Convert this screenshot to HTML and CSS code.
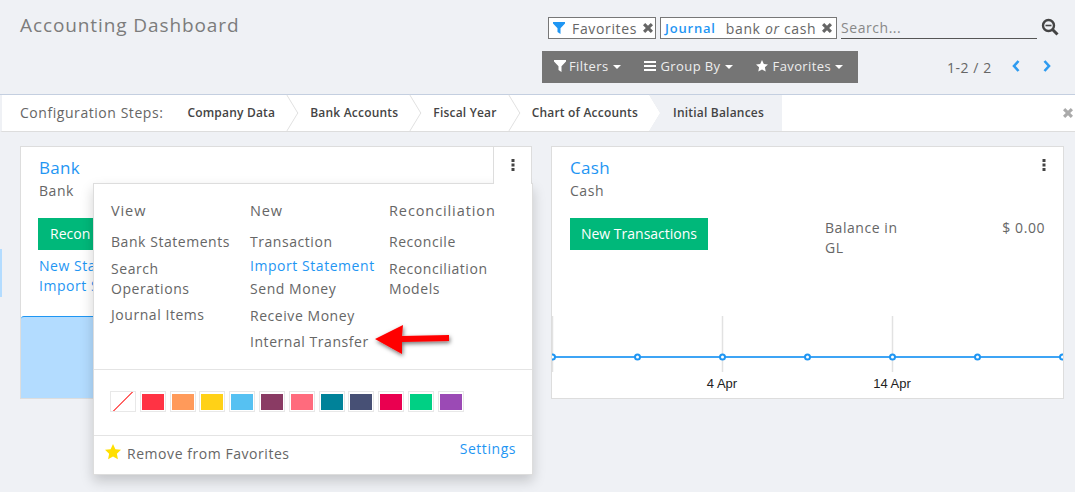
FILE: index.html
```html
<!DOCTYPE html>
<html lang="en">
<head>
    <meta charset="UTF-8">
    <title>Accounting Dashboard</title>
    <link rel="stylesheet" href="styles.css">
</head>
<body>
    <svg class="defs">
        <defs>
            <path id="i-filter" d="M0 0h12v1.400L7.500 6.200V12L4.500 10V6.200L0 1.400z"/>
            <path id="i-star" d="M6 0l1.800 3.900 4.200.5-3.100 2.900.8 4.200L6 9.400l-3.700 2.100.8-4.200L0 4.400l4.200-.5z"/>
            <path id="i-x" d="M2.200 0L5 2.800 7.800 0 10 2.200 7.200 5 10 7.800 7.800 10 5 7.200 2.200 10 0 7.800 2.800 5 0 2.200z"/>
            <path id="i-dots" d="M.5 0h3v3h-3zM.5 4.500h3v3h-3zM.5 9h3v3h-3z"/>
        </defs>
    </svg>

    <header class="control-panel">
        <h1 class="page-title">Accounting Dashboard</h1>
        <div class="search-side">
            <div class="search-row">
                <div class="facet facet-one">
                    <svg class="facet-icon" viewBox="0 0 12 12"><use href="#i-filter"/></svg>
                    <span class="facet-value">Favorites</span>
                    <svg class="facet-x" viewBox="0 0 10 10"><use href="#i-x"/></svg>
                </div>
                <div class="facet facet-two">
                    <span class="facet-label">Journal</span>
                    <span class="facet-value">bank <em>or</em> cash</span>
                    <svg class="facet-x" viewBox="0 0 10 10"><use href="#i-x"/></svg>
                </div>
                <div class="search-input">Search...</div>
                <svg class="search-icon" viewBox="0 0 18 18">
                    <circle cx="7.500" cy="7.500" r="5.500" fill="none" stroke="#444" stroke-width="2.400"/>
                    <path d="M4.500 7.500h6" stroke="#444" stroke-width="1.600"/>
                    <path d="M11.500 11.500l5 5" stroke="#444" stroke-width="3"/>
                </svg>
            </div>
            <div class="tools-row">
                <div class="btn-group">
                    <span class="tool">
                        <svg class="tool-icon" viewBox="0 0 12 12"><use href="#i-filter"/></svg>Filters<i class="caret"></i>
                    </span>
                    <span class="tool">
                        <svg class="tool-icon" viewBox="0 0 12 12"><path d="M0 1h12v2H0zM0 5h12v2H0zM0 9h12v2H0z"/></svg>Group By<i class="caret"></i>
                    </span>
                    <span class="tool">
                        <svg class="tool-icon" viewBox="0 0 12 12"><use href="#i-star"/></svg>Favorites<i class="caret"></i>
                    </span>
                </div>
                <div class="pager">
                    <span class="pager-text">1-2 / 2</span>
                    <svg class="pager-arrow" viewBox="0 0 8 12"><path d="M6.500 1L2 6l4.500 5" fill="none" stroke="#2e9bf0" stroke-width="2.600"/></svg>
                    <svg class="pager-arrow" viewBox="0 0 8 12"><path d="M1.500 1L6 6l-4.500 5" fill="none" stroke="#2e9bf0" stroke-width="2.600"/></svg>
                </div>
            </div>
        </div>
    </header>

    <nav class="steps-bar">
        <span class="steps-label">Configuration Steps:</span>
        <span class="step">Company Data</span>
        <span class="step">Bank Accounts</span>
        <span class="step">Fiscal Year</span>
        <span class="step">Chart of Accounts</span>
        <span class="step step-current">Initial Balances</span>
        <svg class="steps-close" viewBox="0 0 10 10"><use href="#i-x"/></svg>
    </nav>

    <div class="edge-strip"></div>

    <main class="cards">
        <section class="card">
            <div class="card-head">
                <h2 class="card-title">Bank</h2>
                <div class="card-sub">Bank</div>
            </div>
            <div class="card-body card-body-bank">
                <div class="bank-actions">
                    <span class="btn-green btn-bank">Recon</span>
                    <a class="card-link">New Sta</a>
                    <a class="card-link">Import S</a>
                </div>
            </div>
            <div class="bank-graph"></div>
            <div class="menu-tab menu-tab-open">
                <svg class="dots" viewBox="0 0 4 12"><use href="#i-dots"/></svg>
            </div>
            <div class="dropdown">
                <div class="menu-cols">
                    <div class="menu-col">
                        <h3 class="menu-head">View</h3>
                        <a class="menu-item">Bank Statements</a>
                        <a class="menu-item">Search<br>Operations</a>
                        <a class="menu-item">Journal Items</a>
                    </div>
                    <div class="menu-col">
                        <h3 class="menu-head">New</h3>
                        <a class="menu-item">Transaction</a>
                        <a class="menu-item menu-item-hover">Import Statement</a>
                        <a class="menu-item">Send Money</a>
                        <a class="menu-item">Receive Money</a>
                        <a class="menu-item">Internal Transfer</a>
                    </div>
                    <div class="menu-col">
                        <h3 class="menu-head">Reconciliation</h3>
                        <a class="menu-item">Reconcile</a>
                        <a class="menu-item">Reconciliation<br>Models</a>
                    </div>
                </div>
                <div class="swatches">
                    <span class="swatch swatch-none"></span>
                    <span class="swatch c1"></span>
                    <span class="swatch c2"></span>
                    <span class="swatch c3"></span>
                    <span class="swatch c4"></span>
                    <span class="swatch c5"></span>
                    <span class="swatch c6"></span>
                    <span class="swatch c7"></span>
                    <span class="swatch c8"></span>
                    <span class="swatch c9"></span>
                    <span class="swatch c10"></span>
                    <span class="swatch c11"></span>
                </div>
                <div class="menu-foot">
                    <svg class="fav-star" viewBox="0 0 12 12"><use href="#i-star"/></svg>
                    <span class="fav-text">Remove from Favorites</span>
                    <a class="settings">Settings</a>
                </div>
                <svg class="red-arrow" viewBox="0 0 85 40">
                    <defs>
                        <filter id="arrow-shadow" x="-20%" y="-30%" width="140%" height="160%">
                            <feDropShadow dx="1" dy="2" stdDeviation="2" flood-color="#000" flood-opacity=".55"/>
                        </filter>
                    </defs>
                    <path d="M3 17L31 3l-1 11 47-1 0 6-47 1 0 12z" fill="#f00" filter="url(#arrow-shadow)"/>
                </svg>
            </div>
        </section>

        <section class="card">
            <div class="card-head">
                <h2 class="card-title">Cash</h2>
                <div class="card-sub">Cash</div>
            </div>
            <div class="card-body">
                <span class="btn-green">New Transactions</span>
                <div class="balance">
                    <span class="balance-label">Balance in<br>GL</span>
                    <span class="balance-value">$ 0.00</span>
                </div>
            </div>
            <svg class="cash-chart" viewBox="0 0 511 82">
                <path d="M.5 0v56M170.500 0v56M340.500 0v56" stroke="#e2e2e2" stroke-width="1.500" fill="none"/>
                <path d="M0 41h511" stroke="#3ea4f5" stroke-width="2"/>
                <g fill="#fff" stroke="#1f96f3" stroke-width="2">
                    <circle cx="0.500" cy="41" r="2.500"/>
                    <circle cx="85.500" cy="41" r="2.500"/>
                    <circle cx="170.500" cy="41" r="2.500"/>
                    <circle cx="255.500" cy="41" r="2.500"/>
                    <circle cx="340.500" cy="41" r="2.500"/>
                    <circle cx="425.500" cy="41" r="2.500"/>
                    <circle cx="510.500" cy="41" r="2.500"/>
                </g>
                <text class="chart-label" x="170" y="72" text-anchor="middle">4 Apr</text>
                <text class="chart-label" x="340" y="72" text-anchor="middle">14 Apr</text>
            </svg>
            <div class="menu-tab">
                <svg class="dots" viewBox="0 0 4 12"><use href="#i-dots"/></svg>
            </div>
        </section>
    </main>
</body>
</html>
```
FILE: styles.css
```css
*{
    margin: 0;
    padding: 0;
    box-sizing: border-box;
}
html,body{
    height: 100%;
}
body{
    background: #eff1f5;
    font-family: "Open Sans", "Liberation Sans", sans-serif;
    font-size: 14px;
    letter-spacing: .55px;
    color: #666;
    overflow: hidden;
    position: relative;
}
.defs{
    display: none;
}
.edge-strip{
    position: absolute;
    left: 0;
    top: 249px;
    width: 2px;
    height: 48px;
    background: #b3dcff;
}

/* top panel */
.control-panel{
    height: 95px;
    padding: 12px 0 0 20px;
    display: flex;
    justify-content: space-between;
    border-bottom: 1px solid #c4cfe0;
}
.page-title{
    font-size: 19px;
    font-weight: 400;
    letter-spacing: .9px;
    color: #7c7c7c;
}
.search-side{
    width: 533px;
    padding-top: 5px;
}
.search-row{
    display: flex;
    align-items: stretch;
    height: 22px;
    margin-left: 6px;
}
.facet{
    display: flex;
    align-items: center;
    background: #fff;
    border: 1px solid #777;
    white-space: nowrap;
}
.facet-one{
    width: 108px;
    margin-right: 4px;
    padding-left: 4px;
}
.facet-two{
    width: 177px;
    padding-left: 4px;
    margin-right: 4px;
}
.facet-icon{
    width: 12px;
    height: 12px;
    fill: #1f96f3;
    margin-right: 7px;
}
.facet-label{
    color: #1f96f3;
    font-weight: 600;
    font-size: 13px;
    margin-right: 10px;
    letter-spacing: .8px;
}
.facet-value{
    color: #666;
    letter-spacing: .65px;
}
.facet-x{
    width: 10px;
    height: 10px;
    fill: #666;
    margin-left: 6px;
}
.search-input{
    width: 196px;
    margin-right: 3px;
    border-bottom: 1px solid #555;
    color: #888;
    line-height: 22px;
}
.search-icon{
    width: 18px;
    height: 18px;
    margin: 1px 0 0 1px;
}
.tools-row{
    display: flex;
    align-items: center;
    margin-top: 12px;
}
.btn-group{
    width: 316px;
    height: 32px;
    background: #757575;
    display: flex;
    align-items: center;
    padding: 0 0 2px 12px;
    color: #eee;
    font-size: 13px;
    letter-spacing: .4px;
    white-space: nowrap;
}
.tool{
    display: flex;
    align-items: center;
    margin-right: 23px;
}
.tool-icon{
    width: 12px;
    height: 12px;
    fill: #fff;
    margin-right: 3px;
}
.tool + .tool .tool-icon{
    margin-right: 5px;
}
.caret{
    border-top: 4px solid #fff;
    border-left: 4px solid transparent;
    border-right: 4px solid transparent;
    margin-left: 4px;
    margin-top: 2px;
}
.pager{
    display: flex;
    align-items: center;
    margin-left: 89px;
}
.pager-text{
    margin-right: 15px;
    width: 50px;
    white-space: nowrap;
}
.pager-arrow{
    width: 8px;
    height: 12px;
    margin-right: 23px;
    margin-bottom: 3px;
}

/* configuration steps */
.steps-bar{
    height: 37px;
    background: #fff;
    border-bottom: 1px solid #ddd;
    border-left: 2px solid #eff1f5;
    display: flex;
    align-items: center;
    padding-left: 18px;
    position: relative;
}
.steps-label{
    margin: 0 24px 2px 0;
    white-space: nowrap;
}
.step{
    height: 100%;
    display: flex;
    align-items: center;
    font-size: 12px;
    font-weight: 600;
    letter-spacing: .2px;
    color: #444;
    padding: 0 35px 2px 0;
    white-space: nowrap;
    position: relative;
}
.step::after{
    content: "";
    position: absolute;
    right: 10px;
    top: 5px;
    width: 25px;
    height: 25px;
    border-top: 1px solid #ddd;
    border-right: 1px solid #ddd;
    transform: scaleX(.61) rotate(45deg);
}
.step-current{
    background: #eff1f5;
    padding: 0 18px 2px 24px;
    margin-left: -24px;
    clip-path: polygon(0 0, 100% 0, 100% 100%, 0 100%, 11px 50%);
}
.step-current::after{
    display: none;
}
.steps-close{
    position: absolute;
    right: 2px;
    top: 13px;
    width: 10px;
    height: 10px;
    fill: #aaa;
}

/* cards */
.cards{
    display: flex;
    gap: 19px;
    padding: 14px 11px 0 20px;
}
.card{
    flex: 0 0 512px;
    height: 253px;
    background: #fff;
    border: 1px solid #ddd;
    position: relative;
}
.card + .card{
    flex-basis: 513px;
}
.card-head{
    padding: 8px 18px 0;
    height: 71px;
}
.card-title{
    font-size: 17px;
    font-weight: 400;
    color: #1f96f3;
    letter-spacing: .3px;
    line-height: 26px;
}
.card-sub{
    line-height: 20px;
}
.card-body{
    padding: 0 18px;
    height: 98px;
    display: flex;
    justify-content: space-between;
}
.card-body-bank{
    padding-left: 17px;
}
.bank-actions{
    width: 55px;
}
.btn-green{
    display: inline-block;
    height: 32px;
    line-height: 32px;
    width: 138px;
    text-align: center;
    background: #00b87a;
    color: #fff;
    letter-spacing: 0;
    white-space: nowrap;
}
.btn-bank{
    width: 55px;
    padding-left: 12px;
    text-align: left;
}
.card-link{
    display: block;
    color: #1f96f3;
    line-height: 20px;
    white-space: nowrap;
    padding-left: 1px;
}
.btn-green + .card-link{
    margin-top: 6px;
}
.bank-graph{
    height: 82px;
    background: #b3dcff;
    border-top: 1px solid #1f96f3;
    border-top-left-radius: 3px;
}
.balance{
    width: 220px;
    display: flex;
    justify-content: space-between;
    line-height: 20px;
}
.cash-chart{
    display: block;
    width: 511px;
    height: 82px;
}
.chart-label{
    font-family: "Liberation Sans", sans-serif;
    font-size: 13px;
    letter-spacing: 0;
    fill: #222;
}

/* dots and dropdown */
.menu-tab{
    position: absolute;
    right: 0;
    top: 0;
    width: 38px;
    height: 37px;
    padding-top: 12px;
    background: #fff;
    z-index: 6;
}
.menu-tab-open{
    border-left: 1px solid #ddd;
}
.dots{
    display: block;
    width: 4px;
    height: 12px;
    margin: 0 auto;
    fill: #444;
}
.dropdown{
    position: absolute;
    left: 72px;
    top: 36px;
    width: 440px;
    height: 292px;
    background: #fff;
    border: 1px solid #ddd;
    box-shadow: 0 6px 12px rgba(0,0,0,.18);
    z-index: 5;
}
.menu-cols{
    height: 186px;
    padding: 17px 0 0 17px;
    display: grid;
    grid-template-columns: 139px 139px 139px;
    border-bottom: 1px solid #e4e4e4;
}
.menu-head{
    font-size: 14.500px;
    font-weight: 400;
    color: #666;
    letter-spacing: .9px;
    line-height: 20px;
    margin-bottom: 11px;
}
.menu-item{
    display: block;
    line-height: 20px;
    margin-bottom: 6.500px;
    white-space: nowrap;
}
.menu-item-hover{
    color: #1f96f3;
    margin-top: -3px;
    margin-bottom: 3.500px;
}
.swatches{
    height: 66px;
    display: flex;
    gap: 3.800px;
    padding: 21px 0 0 16px;
    border-bottom: 1px solid #e4e4e4;
}
.swatch{
    width: 26px;
    height: 21px;
    border: 1px solid #e8e8e8;
    padding: 1.500px 1px;
    background-clip: content-box;
}
.swatch-none{
    background: linear-gradient(135deg, transparent 47%, #f66 47%, #f66 53%, transparent 53%);
    background-clip: border-box;
}
.c1{ background-color: #ff3344; }
.c2{ background-color: #ff9a5a; }
.c3{ background-color: #ffd117; }
.c4{ background-color: #56c1f2; }
.c5{ background-color: #8a3b64; }
.c6{ background-color: #ff6b7d; }
.c7{ background-color: #008299; }
.c8{ background-color: #475075; }
.c9{ background-color: #ea0050; }
.c10{ background-color: #00d084; }
.c11{ background-color: #9b4ab5; }
.menu-foot{
    display: flex;
    padding: 8px 16px 0 11px;
    align-items: flex-start;
}
.fav-star{
    width: 16px;
    height: 16px;
    fill: #ffdf00;
    margin-right: 6px;
}
.fav-text{
    flex: 1;
}
.settings{
    color: #1f96f3;
    margin-top: -5px;
}
.red-arrow{
    position: absolute;
    left: 278px;
    top: 138px;
    width: 85px;
    height: 40px;
}
```
